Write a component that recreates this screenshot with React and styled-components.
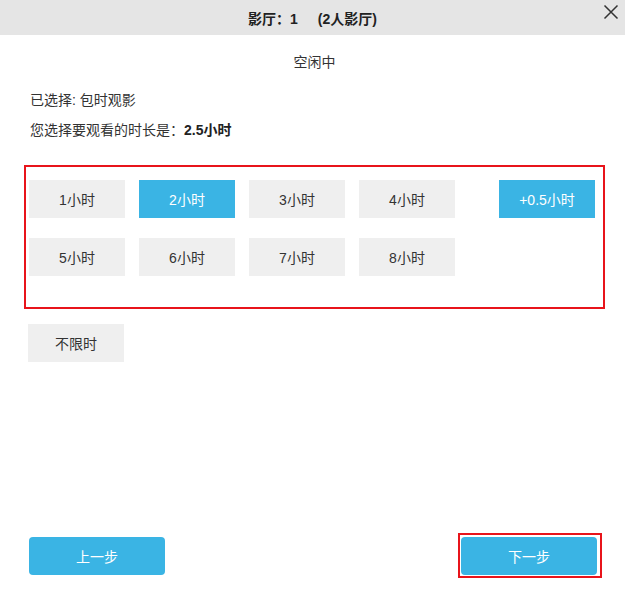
import React from 'react';
import styled, { createGlobalStyle } from 'styled-components';

const GlobalStyle = createGlobalStyle`
    html, body {
        margin: 0;
        padding: 0;
        background: #fff;
    }
    body {
        font-family: "Liberation Sans", "Noto Sans CJK SC", sans-serif;
        font-size: 14px;
        color: #333;
    }
`;

const Dialog = styled.div`
    position: relative;
    width: 625px;
    height: 591px;
    display: flex;
    flex-direction: column;
    overflow: hidden;
`;

const Header = styled.div`
    height: 35px;
    background: #e5e5e5;
    display: flex;
    align-items: center;
    justify-content: center;
    font-weight: bold;
    font-size: 14px;
    color: #222;
    gap: 20px;
`;

const CloseButton = styled.button`
    position: absolute;
    top: 3px;
    right: 5px;
    width: 18px;
    height: 18px;
    padding: 0;
    border: none;
    background: none;
    cursor: pointer;
    display: flex;
    align-items: center;
    justify-content: center;
`;

const Body = styled.div`
    flex: 1;
    display: flex;
    flex-direction: column;
    padding: 0 20px 0 24px;
`;

const Status = styled.div`
    margin-top: 17px;
    line-height: 20px;
    text-align: center;
`;

const InfoLine = styled.div`
    margin-top: ${({ $top }) => $top}px;
    padding-left: 6px;
    line-height: 20px;

    b {
        color: #222;
    }
`;

const OptionBox = styled.div`
    margin-top: 25px;
    width: 581px;
    box-sizing: border-box;
    border: 2px solid #e8141b;
    padding: 13px 0 31px 3px;
    display: flex;
    flex-direction: column;
    gap: 20px;
`;

const OptionRow = styled.div`
    display: flex;
    gap: 14px;
`;

const Option = styled.button`
    width: 96px;
    height: 38px;
    border: none;
    padding: 0;
    font-family: inherit;
    font-size: 14px;
    cursor: pointer;
    background: ${({ $active }) => ($active ? '#3ab4e4' : '#efefef')};
    color: ${({ $active }) => ($active ? '#fff' : '#333')};
    margin-left: ${({ $shift }) => $shift || 0}px;
`;

const Unlimited = styled(Option)`
    margin-top: 15px;
    margin-left: 4px;
`;

const Footer = styled.div`
    margin-top: auto;
    display: flex;
    justify-content: space-between;
    align-items: center;
    padding: 0 23px 13px 29px;
`;

const StepButton = styled.button`
    width: 136px;
    height: 38px;
    border: none;
    border-radius: 4px;
    background: #3ab4e4;
    color: #fff;
    font-family: inherit;
    font-size: 14px;
    cursor: pointer;
`;

const Highlight = styled.div`
    border: 2px solid #e8141b;
    padding: 2px 3px 1px 1px;
    display: flex;
`;

const hours = [
    [
        { label: '1小时' },
        { label: '2小时', active: true },
        { label: '3小时' },
        { label: '4小时' },
        { label: '+0.5小时', active: true, shift: 30 },
    ],
    [{ label: '5小时' }, { label: '6小时' }, { label: '7小时' }, { label: '8小时' }],
];

const App = () => {
    return (
        <>
            <GlobalStyle />
            <Dialog>
                <Header>
                    <span>影厅：1</span>
                    <span>(2人影厅)</span>
                </Header>
                <CloseButton aria-label="关闭">
                    <svg width="16" height="16" viewBox="0 0 16 16">
                        <path d="M1.5 1.5 L14.5 14.5 M14.5 1.5 L1.5 14.5" stroke="#333" strokeWidth="1.5" fill="none" />
                    </svg>
                </CloseButton>
                <Body>
                    <Status>空闲中</Status>
                    <InfoLine $top={18}>已选择: 包时观影</InfoLine>
                    <InfoLine $top={10}>您选择要观看的时长是：<b>2.5小时</b></InfoLine>
                    <OptionBox>
                        {hours.map((row, i) => (
                            <OptionRow key={i}>
                                {row.map((h) => (
                                    <Option key={h.label} $active={h.active} $shift={h.shift}>{h.label}</Option>
                                ))}
                            </OptionRow>
                        ))}
                    </OptionBox>
                    <div>
                        <Unlimited>不限时</Unlimited>
                    </div>
                </Body>
                <Footer>
                    <StepButton>上一步</StepButton>
                    <Highlight>
                        <StepButton>下一步</StepButton>
                    </Highlight>
                </Footer>
            </Dialog>
        </>
    );
};

export default App;
